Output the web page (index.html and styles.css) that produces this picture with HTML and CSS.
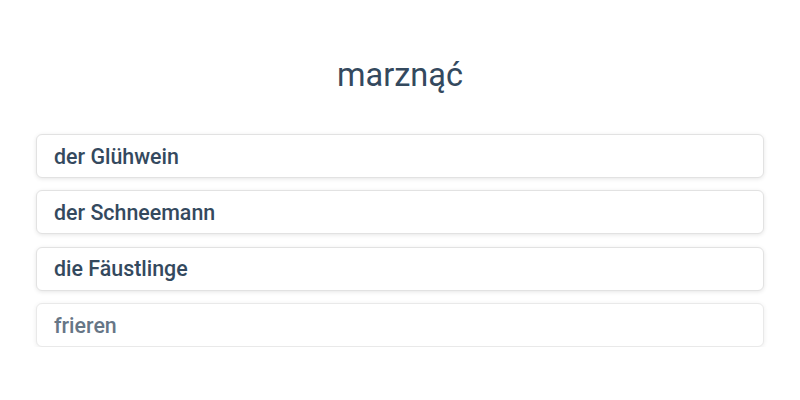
FILE: index.html
```html
<!DOCTYPE html>
<html lang="pl">
<head>
<meta charset="utf-8">
<link rel="stylesheet" href="styles.css">
</head>
<body>
<main class="quiz">
  <h1 class="prompt">marznąć</h1>
  <ul class="options">
    <li class="option">der Glühwein</li>
    <li class="option">der Schneemann</li>
    <li class="option">die Fäustlinge</li>
    <li class="option option--faded">frieren</li>
  </ul>
</main>
</body>
</html>
```
FILE: styles.css
```css
html, body {
  margin: 0;
  padding: 0;
  background: #ffffff;
}
body {
  font-family: Roboto, "Noto Sans", sans-serif;
  color: #34495e;
}
.quiz {
  padding: 53px 36px 0;
}
.prompt {
  margin: 0 0 37px;
  text-align: center;
  font-size: 32.5px;
  font-weight: 400;
  line-height: 44px;
  color: #34495e;
}
.options {
  list-style: none;
  margin: 0;
  padding: 0;
  display: flex;
  flex-direction: column;
  gap: 12.4px;
}
.option {
  height: 44px;
  box-sizing: border-box;
  display: flex;
  align-items: center;
  padding: 0 17px;
  border: 1px solid #e2e2e2;
  border-radius: 6px;
  box-shadow: 0 1px 4px rgba(0, 0, 0, 0.1);
  font-size: 21.4px;
  font-weight: 500;
  background: #fff;
}
.option--faded {
  opacity: 0.75;
}
```
